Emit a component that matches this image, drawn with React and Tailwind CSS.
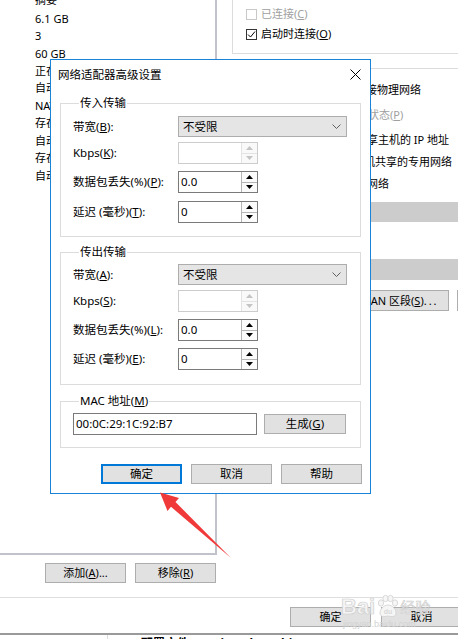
import React from "react";

function Tri({ up, disabled }) {
  const c = disabled ? "#c4c4c4" : "#000000";
  return (
    <svg width="7" height="4" viewBox="0 0 7 4">
      {up ? <polygon points="0,4 7,4 3.5,0" fill={c} /> : <polygon points="0,0 7,0 3.5,4" fill={c} />}
    </svg>
  );
}

function Spin({ value, disabled }) {
  return (
    <div
      className={
        disabled
          ? "flex w-[80px] h-[22px] border border-[#cccccc] bg-white"
          : "flex w-[80px] h-[22px] border border-[#7a7a7a] bg-white"
      }
    >
      <div className="flex-1 flex items-center pl-[2px] leading-[14px]">{value}</div>
      <div
        className={
          disabled
            ? "w-[16px] flex flex-col border-l border-[#e3e3e3] bg-[#f9f9f9]"
            : "w-[16px] flex flex-col border-l border-[#b5b5b5] bg-[#fbfbfb]"
        }
      >
        <div
          className={
            disabled
              ? "flex-1 flex items-center justify-center border-b border-[#e3e3e3]"
              : "flex-1 flex items-center justify-center border-b border-[#b5b5b5]"
          }
        >
          <Tri up disabled={disabled} />
        </div>
        <div className="flex-1 flex items-center justify-center">
          <Tri disabled={disabled} />
        </div>
      </div>
    </div>
  );
}

function Select() {
  return (
    <div className="w-[169px] h-[21px] bg-[#e5e5e5] border border-[#adadad] flex items-center justify-between pl-[4px] pr-[5px]">
      <span className="leading-[14px]">不受限</span>
      <svg width="9" height="5" viewBox="0 0 9 5">
        <polyline points="0.5,0.5 4.5,4.5 8.5,0.5" fill="none" stroke="#606060" strokeWidth="1" />
      </svg>
    </div>
  );
}

function Btn({ children, primary, w = "w-[81px]" }) {
  return (
    <div
      className={
        primary
          ? `${w} h-[20px] shrink-0 bg-[#e1e1e1] border-2 border-[#0078d7] flex items-center justify-center leading-[14px]`
          : `${w} h-[20px] shrink-0 bg-[#e1e1e1] border border-[#adadad] flex items-center justify-center leading-[14px]`
      }
    >
      {children}
    </div>
  );
}

function Row({ label, children, className = "" }) {
  return (
    <div className={`flex items-center ${className}`}>
      <div className="w-[105px] shrink-0 leading-[14px] whitespace-nowrap">{label}</div>
      {children}
    </div>
  );
}

function Transfer({ title, keys, first }) {
  return (
    <fieldset
      className={
        first
          ? "mx-[9px] mt-[7px] border border-[#dcdcdc] pl-[12px] pb-[13px]"
          : "mx-[9px] mt-[8px] border border-[#dcdcdc] pl-[12px] pb-[14px]"
      }
    >
      <legend className="ml-[6px] px-[1px] leading-[14px]">{title}</legend>
      <Row className={first ? "mt-[6px] h-[21px]" : "mt-[5px] h-[21px]"} label={<>带宽(<u>{keys[0]}</u>):</>}>
        <Select />
      </Row>
      <Row className="mt-[5px] h-[22px]" label={<>Kbps(<u>{keys[1]}</u>):</>}>
        <Spin value="" disabled />
      </Row>
      <Row className="mt-[7px] h-[22px]" label={<>数据包丢失(%)(<u>{keys[2]}</u>):</>}>
        <Spin value="0.0" />
      </Row>
      <Row className={first ? "mt-[8px] h-[22px]" : "mt-[7px] h-[22px]"} label={<>延迟 (毫秒)(<u>{keys[3]}</u>):</>}>
        <Spin value="0" />
      </Row>
    </fieldset>
  );
}

function Dialog() {
  return (
    <div className="absolute left-[50px] top-[59px] w-[321px] h-[435px] bg-white border border-[#1883d7] text-[11.5px] flex flex-col">
      <div className="h-[29px] flex items-center justify-between pl-[7px] pr-[9px]">
        <span className="leading-[14px]">网络适配器高级设置</span>
        <svg width="11" height="11" viewBox="0 0 11 11">
          <path d="M0.5 0.5 L10.5 10.5 M10.5 0.5 L0.5 10.5" stroke="#000" strokeWidth="1" />
        </svg>
      </div>
      <Transfer title="传入传输" keys={["B", "K", "P", "T"]} first />
      <Transfer title="传出传输" keys={["A", "S", "L", "E"]} />
      <fieldset className="mx-[9px] mt-[9px] border border-[#dcdcdc] pl-[12px] pb-[12px]">
        <legend className="ml-[6px] px-[1px] leading-[14px]">
          MAC 地址(<u>M</u>)
        </legend>
        <div className="mt-[5px] flex items-center">
          <div className="w-[184px] h-[22px] border border-[#7a7a7a] flex items-center pl-[2px] leading-[14px]">
            00:0C:29:1C:92:B7
          </div>
          <div className="ml-[7px]">
            <Btn w="w-[82px]">
              生成(<u>G</u>)
            </Btn>
          </div>
        </div>
      </fieldset>
      <div className="mt-[16px] pl-[50px] flex gap-[9px]">
        <Btn primary>确定</Btn>
        <Btn>取消</Btn>
        <Btn>帮助</Btn>
      </div>
    </div>
  );
}

function CheckBox({ checked, disabled }) {
  if (disabled) {
    return <div className="w-[11px] h-[11px] border border-[#c8c8c8] bg-white shrink-0" />;
  }
  return (
    <div className="w-[11px] h-[11px] border border-[#333333] bg-white shrink-0 flex items-center justify-center">
      {checked && (
        <svg width="9" height="9" viewBox="0 0 9 9">
          <polyline points="1,4.5 3.5,7 8,1.5" fill="none" stroke="#000" strokeWidth="1" />
        </svg>
      )}
    </div>
  );
}

const listItems = [
  "6.1 GB",
  "3",
  "60 GB",
  "正在使用文件 D:\\系统镜像\\CentOS-7.iso",
  "自动检测",
  "NAT",
  "存在",
  "自动检测",
  "存在",
  "自动检测",
];

export default function App() {
  return (
    <div className="relative w-[458px] h-[639px] overflow-hidden bg-white text-black text-[11px] font-['Noto_Sans','Noto_Sans_CJK_SC',sans-serif]">
      {/* top section */}
      <div className="flex h-[555px]">
        <div className="w-[217px] shrink-0 border-r-2 border-b-2 border-[#c2c2ca] overflow-hidden">
          <div className="mt-[-11px] h-[21px] pl-[35px] flex items-center leading-[14px]">摘要</div>
          {listItems.map((t, i) => (
            <div key={i} className="h-[17.45px] pl-[35px] flex items-center whitespace-nowrap leading-[14px]">
              {t}
            </div>
          ))}
        </div>
        <div className="ml-[15px] w-[240px] shrink-0">
          <div className="mt-[-20px] h-[74px] border-l border-b border-[#dcdcdc] pl-[13px] pt-[24px]">
            <div className="h-[20px] flex items-center gap-[4px] text-[#a0a0a0]">
              <CheckBox disabled />
              <span className="leading-[14px]">
                已连接(<u>C</u>)
              </span>
            </div>
            <div className="h-[20px] flex items-center gap-[4px]">
              <CheckBox checked />
              <span className="leading-[14px]">
                启动时连接(<u>O</u>)
              </span>
            </div>
          </div>
          <div className="mt-[14px] h-[420px] border-l border-t border-[#dcdcdc] whitespace-nowrap">
            <div className="mt-[11px] h-[20px] pl-[122px] flex items-center leading-[14px]">连接物理网络</div>
            <div className="mt-[5px] h-[20px] pl-[113px] flex items-center leading-[14px] text-[#a0a0a0]">
              连接状态(<u>P</u>)
            </div>
            <div className="mt-[5px] h-[20px] pl-[123px] flex items-center leading-[14px]">共享主机的 IP 地址</div>
            <div className="mt-[2px] h-[20px] pl-[120px] flex items-center leading-[14px]">主机共享的专用网络</div>
            <div className="mt-[2px] h-[20px] pl-[123px] flex items-center leading-[14px]">拟网络</div>
            <div className="mt-[8px] ml-[30px] h-[20px] w-[220px] bg-[#cccccc]" />
            <div className="mt-[37px] ml-[30px] h-[21px] w-[220px] bg-[#cccccc]" />
            <div className="mt-[10px] ml-[126px] flex gap-[8px]">
              <div className="w-[90px] h-[21px] shrink-0 bg-[#e1e1e1] border border-[#adadad] flex items-center pl-[5px] leading-[14px]">
                LAN 区段(<u>S</u>)<span className="tracking-[2px]">...</span>
              </div>
              <div className="w-[81px] h-[21px] shrink-0 bg-[#e1e1e1] border border-[#adadad] flex items-center justify-center leading-[14px]">
                高级(<u>V</u>)...
              </div>
            </div>
          </div>
        </div>
      </div>

      {/* add / remove */}
      <div className="mt-[8px] pl-[45px] flex gap-[9px]">
        <Btn>
          添加(<u>A</u>)...
        </Btn>
        <Btn>
          移除(<u>R</u>)
        </Btn>
      </div>

      {/* separator + ok/cancel */}
      <div className="mt-[14px] border-t border-[#dfdfdf] pt-[9px] pl-[290px] flex gap-[10px]">
        <Btn>确定</Btn>
        <Btn>取消</Btn>
      </div>

      {/* main window behind */}
      <div className="mt-[6px] border-t-2 border-[#9a9a9a] flex h-[20px]">
        <div className="w-[107px] shrink-0" />
        <div className="border-l border-[#dcdcdc] pl-[33px] pt-[2px] text-[12px] font-bold leading-[14px] whitespace-nowrap">
          配置文件: D:\Virtual Machines\1.0\1.0.vmx
        </div>
      </div>

      <Dialog />

      {/* red arrow */}
      <svg className="absolute left-0 top-0 pointer-events-none" width="458" height="639" viewBox="0 0 458 639">
        <polygon
          points="160,492.5 179,498 175.5,502 231,558 171,506.8 167.5,511"
          fill="#f03a3a"
        />
      </svg>

      {/* watermark */}
      <div className="absolute left-[341px] top-[594px] pointer-events-none flex flex-col items-start">
        <div className="flex items-center">
          <span className="text-[22px] font-bold leading-[24px] text-[#f4f4f4] [-webkit-text-stroke:0.7px_#cfcfcf] font-['Liberation_Sans',sans-serif]">
            Bai
          </span>
          <svg width="25" height="25" viewBox="0 0 25 25">
            <g fill="#f6f6f6" stroke="#d0d0d0" strokeWidth="0.8">
              <ellipse cx="6" cy="9" rx="2.6" ry="3.2" />
              <ellipse cx="10.5" cy="4.5" rx="2.6" ry="3.2" />
              <ellipse cx="15.5" cy="4.5" rx="2.6" ry="3.2" />
              <ellipse cx="20" cy="9" rx="2.6" ry="3.2" />
              <path d="M13 11 C8 11 5 16 5 19 C5 23 9 23 13 22 C17 23 21 23 21 19 C21 16 18 11 13 11 Z" />
            </g>
            <text x="13" y="20" textAnchor="middle" fontSize="7" fontWeight="bold" fill="#d8d8d8" fontFamily="Liberation Sans, sans-serif">
              du
            </text>
          </svg>
          <span className="text-[15px] leading-[20px] text-[#f4f4f4] [-webkit-text-stroke:0.6px_#cfcfcf] font-['Noto_Sans_CJK_SC',sans-serif]">
            经验
          </span>
        </div>
        <span className="ml-[2px] text-[9px] leading-[10px] text-[#d2d2d2] font-['Liberation_Sans',sans-serif]">
          jingyan.baidu.com
        </span>
      </div>
    </div>
  );
}
